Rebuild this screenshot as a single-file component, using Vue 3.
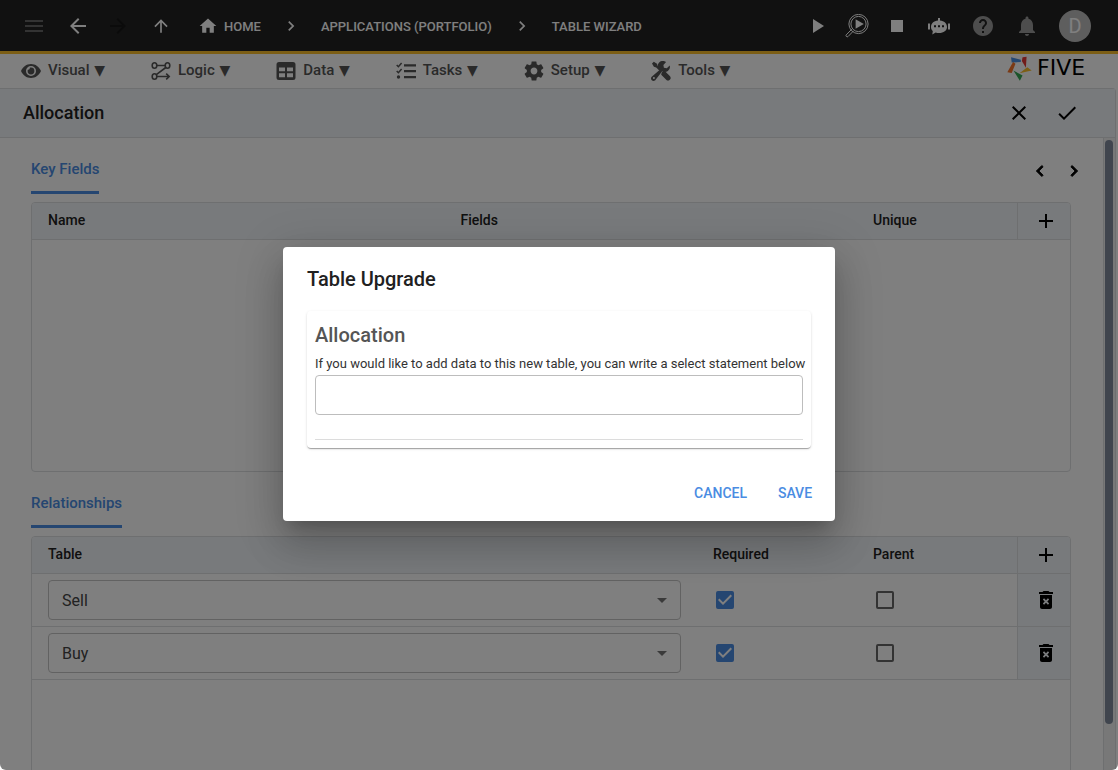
<script setup>
import { ref } from 'vue'

const query = ref('')
const rows = ref([
  { table: 'Sell', required: true, parent: false },
  { table: 'Buy', required: true, parent: false }
])
const menus = ['Visual', 'Logic', 'Data', 'Tasks', 'Setup', 'Tools']
</script>

<template>
  <div class="app">
    <header class="topbar">
      <button class="slot menu" aria-label="Menu">
        <svg width="24" height="24" viewBox="0 0 24 24"><path d="M3 18h18v-2H3v2zm0-5h18v-2H3v2zm0-7v2h18V6H3z" /></svg>
      </button>
      <button class="slot" aria-label="Back">
        <svg width="24" height="24" viewBox="0 0 24 24"><path d="M20 11H7.83l5.59-5.59L12 4l-8 8 8 8 1.41-1.41L7.83 13H20v-2z" /></svg>
      </button>
      <button class="slot forward" aria-label="Forward" disabled>
        <svg width="24" height="24" viewBox="0 0 24 24"><path d="M12 4l-1.41 1.41L16.17 11H4v2h12.17l-5.58 5.59L12 20l8-8z" /></svg>
      </button>
      <button class="slot up" aria-label="Up">
        <svg width="20" height="20" viewBox="0 0 24 24"><path d="M4 12l1.41 1.41L11 7.83V20h2V7.83l5.58 5.59L20 12l-8-8-8 8z" /></svg>
      </button>
      <nav class="crumbs" aria-label="Breadcrumb">
        <a href="#" class="home">
          <svg width="20" height="20" viewBox="0 0 24 24"><path d="M10 20v-6h4v6h5v-8h3L12 3 2 12h3v8z" /></svg>
          HOME
        </a>
        <svg width="20" height="20" viewBox="0 0 24 24"><path d="M10 6L8.59 7.41 13.17 12l-4.58 4.59L10 18l6-6z" /></svg>
        <a href="#">APPLICATIONS (PORTFOLIO)</a>
        <svg width="20" height="20" viewBox="0 0 24 24"><path d="M10 6L8.59 7.41 13.17 12l-4.58 4.59L10 18l6-6z" /></svg>
        <a href="#">TABLE WIZARD</a>
      </nav>
      <div class="tools">
        <button class="tool" aria-label="Run">
          <svg width="24" height="24" viewBox="0 0 24 24"><path d="M8 5v14l11-7z" /></svg>
        </button>
        <button class="tool" aria-label="Inspect">
          <svg width="24" height="24" viewBox="0 0 24 24">
            <g fill="none" stroke="currentColor" stroke-width="1">
              <circle cx="13.5" cy="10" r="9.6" /><circle cx="13.5" cy="10" r="7.6" />
              <path d="M6.8 15.2l-5.6 5.7c-.9 1 .8 2.6 1.8 1.7l5.5-5.7" />
            </g>
            <path d="M10.6 5.2v9.6l8.2-4.8z" />
          </svg>
        </button>
        <button class="tool" aria-label="Stop">
          <svg width="24" height="24" viewBox="0 0 24 24"><path d="M6 6h12v12H6z" /></svg>
        </button>
        <button class="tool wide" aria-label="Assistant">
          <svg width="24" height="24" viewBox="0 0 24 24">
            <path fill-rule="evenodd" d="M11 4h2v2.6c4.2.3 7 3 7 6.4 0 3.6-3.300 6-8 6-1.200 0-2.300-.1-3.300-.5L5.300 20.600l.5-3.600C4.600 15.900 4 14.600 4 13c0-3.400 2.800-6.100 7-6.400zM7 11.200v2h2v-2zm4 0v2h2v-2zm4 0v2h2v-2z" />
            <path d="M1 9.500h2v6H1zM21 9.500h2v6h-2z" />
          </svg>
        </button>
        <button class="tool wide soft" aria-label="Help">
          <svg width="24" height="24" viewBox="0 0 24 24"><path d="M12 2C6.480 2 2 6.480 2 12s4.480 10 10 10 10-4.480 10-10S17.520 2 12 2zm1 17h-2v-2h2v2zm2.070-7.750l-.9.920C13.450 12.900 13 13.500 13 15h-2v-.5c0-1.100.45-2.100 1.170-2.830l1.240-1.260c.37-.36.59-.86.59-1.410 0-1.100-.9-2-2-2s-2 .9-2 2H8c0-2.210 1.790-4 4-4s4 1.790 4 4c0 .88-.36 1.680-.93 2.250z" /></svg>
        </button>
        <button class="tool wide soft" aria-label="Notifications">
          <svg width="24" height="24" viewBox="0 0 24 24"><path d="M12 22c1.100 0 2-.9 2-2h-4c0 1.100.89 2 2 2zm6-6v-5c0-3.070-1.640-5.640-4.500-6.320V4c0-.83-.67-1.500-1.500-1.500s-1.500.67-1.500 1.500v.68C7.630 5.360 6 7.920 6 11v5l-2 2v1h16v-1l-2-2z" /></svg>
        </button>
        <button class="avatar" aria-label="Account">D</button>
      </div>
    </header>

    <nav class="menubar" aria-label="Main">
      <button v-for="m in menus" :key="m" class="menu-item">
        <svg v-if="m === 'Visual'" width="20" height="20" viewBox="0 0 20 20">
          <path fill-rule="evenodd" d="M10 3C5.500 3 1.800 5.800 0 10c1.800 4.200 5.500 7 10 7s8.200-2.800 10-7c-1.800-4.200-5.500-7-10-7zm0 2a5 5 0 110 10 5 5 0 010-10z" />
          <path d="M10 6.600a3.400 3.400 0 11-3.400 3.400c0-.5.100-.9.300-1.300a1.600 1.600 0 001.900-1.900c.4-.1.800-.2 1.200-.2z" />
        </svg>
        <svg v-else-if="m === 'Logic'" width="20" height="20" viewBox="0 0 20 20" fill="none" stroke="currentColor" stroke-width="1.600">
          <ellipse cx="3.500" cy="4.500" rx="2.300" ry="2.700" /><ellipse cx="16.500" cy="4.500" rx="2.300" ry="2.700" /><ellipse cx="3.500" cy="15.500" rx="2.300" ry="2.700" />
          <path d="M6 4.500h8M14.800 6.500L5.300 13.700M6 15.500h12M15.200 12.600l3 2.900-3 2.900" />
        </svg>
        <svg v-else-if="m === 'Data'" width="20" height="20" viewBox="0 0 20 20">
          <path fill-rule="evenodd" d="M3 1h14a2.500 2.500 0 012.500 2.500v13A2.500 2.500 0 0117 19H3a2.500 2.500 0 01-2.500-2.500v-13A2.500 2.500 0 013 1zm0 5.500v3.800h6V6.500zm8 0v3.800h6V6.500zm-8 5.800v4h6v-4zm8 0v4h6v-4z" />
        </svg>
        <svg v-else-if="m === 'Tasks'" width="20" height="20" viewBox="0 0 20 20">
          <path d="M8 3.200h12v2.200H8zM8 9h12v2.200H8zM8 15h12v2.200H8z" /><circle cx="2.500" cy="16" r="1.700" />
          <path d="M.7 4l1.700 1.700L5.600 2M.7 10l1.700 1.700L5.600 8" fill="none" stroke="currentColor" stroke-width="1.500" />
        </svg>
        <svg v-else-if="m === 'Setup'" width="20" height="20" viewBox="2 2 20 20"><path d="M19.140 12.940c.04-.3.060-.61.060-.94 0-.32-.02-.64-.07-.94l2.030-1.580c.18-.14.23-.41.12-.61l-1.920-3.320c-.12-.22-.37-.29-.59-.22l-2.390.96c-.5-.38-1.030-.7-1.620-.94l-.36-2.540c-.04-.24-.24-.41-.48-.41h-3.840c-.24 0-.43.17-.47.41l-.36 2.540c-.59.24-1.130.57-1.620.94l-2.390-.96c-.22-.08-.47 0-.59.22L2.740 8.870c-.12.21-.08.47.12.61l2.030 1.580c-.05.3-.09.63-.09.94s.02.64.07.94l-2.030 1.580c-.18.14-.23.41-.12.61l1.920 3.320c.12.22.37.29.59.22l2.390-.96c.5.38 1.030.7 1.620.94l.36 2.540c.05.24.24.41.48.41h3.840c.24 0 .44-.17.47-.41l.36-2.540c.59-.24 1.130-.56 1.620-.94l2.390.96c.22.08.47 0 .59-.22l1.920-3.320c.12-.22.07-.47-.12-.61l-2.010-1.580zM12 15.400c-1.880 0-3.400-1.520-3.400-3.400s1.520-3.400 3.400-3.400 3.400 1.520 3.400 3.400-1.520 3.400-3.400 3.400z" /></svg>
        <svg v-else width="20" height="20" viewBox="0 0 20 20">
          <path d="M2.800.8L1 2.600l1.900 3.200 2.300.7 3.300 3.300 1.500-1.500L6.700 5 6 2.700z" />
          <path d="M11.800 10.300l1.700-.5 5.300 5.300a2.500 2.500 0 01-3.600 3.600l-5-5 .4-1.900z" />
          <path fill-rule="evenodd" d="M1.300 15.200l7.200-6.300a5 5 0 016.600-7.800L12.400 3.900l.5 2.900 2.900.4 2.900-2.600a5 5 0 01-7.500 5.600l-6.400 8.200a2.500 2.500 0 11-3.500-3.200zm1.600.9a1 1 0 100 2 1 1 0 000-2z" />
        </svg>
        <span class="menu-label">{{ m }} <span class="caret">▼</span></span>
      </button>
      <div class="logo">
        <svg width="25" height="25" viewBox="0 0 74 74" aria-hidden="true">
          <path fill="#4a90e2" d="M12 4l29 7v7l-27 1z" />
          <path fill="#e53935" d="M46 4l12-2-2 33-12-20z" />
          <path fill="#f4742b" d="M18 18l7 5-11 27-13-2z" />
          <path fill="#f8bd2a" d="M37 51l23-18 13 10z" />
          <path fill="#34a853" d="M19 43l27 15-8 15z" />
        </svg>
        <span>FIVE</span>
      </div>
    </nav>

    <main class="panel">
      <div class="panel-head">
        <h1>Allocation</h1>
        <button class="tool wide-2" aria-label="Discard">
          <svg width="24" height="24" viewBox="0 0 24 24"><path d="M19 6.410L17.590 5 12 10.590 6.410 5 5 6.410 10.590 12 5 17.590 6.410 19 12 13.410 17.590 19 19 17.590 13.410 12z" /></svg>
        </button>
        <button class="tool wide-2" aria-label="Accept">
          <svg width="24" height="24" viewBox="0 0 24 24"><path d="M9 16.170L4.830 12l-1.420 1.410L9 19 21 7l-1.410-1.410z" /></svg>
        </button>
      </div>

      <div class="panel-body">
        <div class="content">
          <div class="tabline">
            <button class="tab">Key Fields</button>
            <div class="pager">
              <button aria-label="Previous"><svg width="22" height="22" viewBox="0 0 24 24"><path d="M15.410 7.410L14 6l-6 6 6 6 1.410-1.410L10.830 12z" stroke="currentColor" /></svg></button>
              <button aria-label="Next"><svg width="22" height="22" viewBox="0 0 24 24"><path d="M10 6L8.590 7.410 13.170 12l-4.580 4.590L10 18l6-6z" stroke="currentColor" /></svg></button>
            </div>
          </div>
          <div class="grid">
            <table>
              <colgroup><col /><col /><col class="c-flag" /><col class="c-act" /></colgroup>
              <thead>
                <tr>
                  <th>Name</th><th>Fields</th><th>Unique</th>
                  <th class="act"><button aria-label="Add field"><svg width="24" height="24" viewBox="0 0 24 24"><path d="M19 13h-6v6h-2v-6H5v-2h6V5h2v6h6v2z" /></svg></button></th>
                </tr>
              </thead>
            </table>
          </div>

          <div class="tabline">
            <button class="tab">Relationships</button>
          </div>
          <div class="grid">
            <table>
              <colgroup><col /><col class="c-flag" /><col class="c-flag" /><col class="c-act" /></colgroup>
              <thead>
                <tr>
                  <th>Table</th><th>Required</th><th>Parent</th>
                  <th class="act"><button aria-label="Add relationship"><svg width="24" height="24" viewBox="0 0 24 24"><path d="M19 13h-6v6h-2v-6H5v-2h6V5h2v6h6v2z" /></svg></button></th>
                </tr>
              </thead>
              <tbody>
                <tr v-for="(row, i) in rows" :key="i">
                  <td>
                    <div class="select">
                      <select v-model="row.table" :aria-label="'Table ' + (i + 1)">
                        <option>Sell</option>
                        <option>Buy</option>
                      </select>
                      <svg width="24" height="24" viewBox="0 0 24 24"><path d="M7 10l5 5 5-5z" /></svg>
                    </div>
                  </td>
                  <td v-for="k in ['required', 'parent']" :key="k">
                    <span class="check">
                      <input v-model="row[k]" type="checkbox" :aria-label="row.table + ' ' + k" />
                      <svg v-if="row[k]" width="18" height="18" viewBox="3 3 18 18"><path d="M10 17l-5-5 1.410-1.410L10 14.170l7.590-7.590L19 8l-9 9z" /></svg>
                    </span>
                  </td>
                  <td class="act">
                    <button :aria-label="'Delete ' + row.table">
                      <svg width="24" height="24" viewBox="0 0 24 24"><path fill-rule="evenodd" d="M9.500 3h5l1 1H19v2H5V4h3.500zM6 7h12v12c0 1.100-.9 2-2 2H8c-1.100 0-2-.9-2-2zm2.800 4.600l1.900 1.900-1.900 1.900 1.300 1.300 1.900-1.900 1.900 1.900 1.300-1.300-1.900-1.900 1.900-1.900-1.300-1.300-1.900 1.900-1.900-1.900z" /></svg>
                    </button>
                  </td>
                </tr>
              </tbody>
            </table>
          </div>
        </div>
        <div class="track"><div class="thumb"></div></div>
      </div>
    </main>

    <div class="overlay">
      <section class="dialog" role="dialog" aria-modal="true" aria-labelledby="dlg-title">
        <h2 id="dlg-title">Table Upgrade</h2>
        <div class="card">
          <h3>Allocation</h3>
          <label for="query">If you would like to add data to this new table, you can write a select statement below</label>
          <input id="query" v-model="query" type="text" />
          <hr />
        </div>
        <div class="actions">
          <button>CANCEL</button>
          <button>SAVE</button>
        </div>
      </section>
    </div>
  </div>
</template>

<style>
body { background: #fff; }
</style>

<style scoped>
* { box-sizing: border-box; }
.app {
  position: relative;
  display: flex;
  flex-direction: column;
  height: 100vh;
  overflow: hidden;
  background: #fff;
  color: #212121;
  font-family: Roboto, "Liberation Sans", sans-serif;
  font-size: 14px;
  border-radius: 0 0 6px 6px;
}
svg { display: block; flex: none; fill: currentColor; }
svg[fill="none"], svg g[fill="none"] { fill: none; }
button {
  display: flex;
  align-items: center;
  justify-content: center;
  padding: 0;
  border: 0;
  background: none;
  color: inherit;
  font: inherit;
  cursor: pointer;
}
a { color: inherit; text-decoration: none; }
h1, h2, h3 { margin: 0; font-weight: 500; }

.topbar {
  display: flex;
  flex: none;
  align-items: center;
  height: 54px;
  padding: 0 27px 0 12px;
  border-bottom: 3px solid #f8bd2a;
  background: #222;
  color: #fff;
}
.slot { width: 44px; height: 44px; }
.menu { color: #666; }
.forward { width: 36px; color: #161616; }
.up { width: 50px; }
.crumbs {
  display: flex;
  align-items: center;
  gap: 20px;
  margin-left: 12px;
  font-size: 13px;
  font-weight: 500;
  white-space: nowrap;
}
.crumbs a { padding-top: 2px; }
.home { display: flex; align-items: center; gap: 6px; }
.home svg { margin-bottom: 2px; }
.tools { display: flex; align-items: center; margin-left: auto; }
.tool { width: 40px; height: 40px; }
.wide { width: 44px; }
.wide-2 { width: 48px; }
.soft { color: #9a9a9a; }
.avatar {
  width: 32px;
  height: 32px;
  margin-left: 10px;
  border-radius: 50%;
  background: #bdbdbd;
  font-size: 20px;
}

.menubar {
  display: flex;
  flex: none;
  align-items: center;
  gap: 46px;
  height: 34px;
  padding: 0 23px 0 21px;
  color: #555;
  font-weight: 500;
  font-size: 15px;
}
.menu-item { gap: 7px; white-space: nowrap; }
.menu-label { padding-bottom: 2px; line-height: 20px; }
.caret { margin-left: 1px; font-family: "DejaVu Sans", sans-serif; font-size: 14px; line-height: 14px; }
.logo {
  display: flex;
  align-items: center;
  align-self: flex-start;
  gap: 5px;
  width: 88px;
  height: 28px;
  margin-left: auto;
  color: #000;
  font: 22px/24px "DejaVu Sans", sans-serif;
}

.panel {
  display: flex;
  flex: 1;
  flex-direction: column;
  min-height: 0;
  margin-right: 2px;
  border: 1px solid #dcdee1;
  border-width: 1px 1px 0 0;
  border-radius: 0 4px 0 0;
}
.panel-head {
  display: flex;
  flex: none;
  align-items: center;
  height: 49px;
  padding: 0 24px 0 23px;
  border-bottom: 1px solid #dcdee1;
  background: #f1f4f8;
}
.panel-head h1 { flex: 1; font-size: 18px; line-height: 24px; }
.panel-head .tool { color: #000; }
.panel-body { display: flex; flex: 1; min-height: 0; }
.content { flex: 1; min-width: 0; padding: 0 32px 0 31px; overflow: hidden; }
.track { flex: none; width: 12px; padding: 2px 1px 0; border-left: 1px solid #dcdee1; background: #f0f0f0; }
.thumb { width: 8px; height: 92.7%; border-radius: 4px; background: #808a9c; }

.tabline { display: flex; align-items: flex-start; justify-content: space-between; height: 64px; }
.tab {
  height: 56px;
  padding-top: 9px;
  border-bottom: 3px solid #4a8ce2;
  color: #4a8ce2;
  font-size: 15px;
  font-weight: 500;
}
.pager { display: flex; padding-top: 16px; margin-right: -20px; color: #000; }
.pager button { width: 34px; height: 34px; }

.grid {
  height: 270px;
  overflow: hidden;
  border: 1px solid #dcdee1;
  border-radius: 4px;
}
table { width: 100%; table-layout: fixed; border-collapse: separate; border-spacing: 0; }
.c-flag { width: 160px; }
.c-act { width: 53px; }
th, td { border-bottom: 1px solid #dcdee1; text-align: left; }
th { height: 37px; padding: 0 16px 2px; background: #f1f4f8; font-weight: 500; }
td { height: 53px; padding: 0 16px; }
.act { padding: 0 0 0 4px; border-left: 1px solid #dcdee1; background: #f1f4f8; color: #000; }
.act button { width: 100%; }

.select { position: relative; }
.select select {
  display: block;
  width: 100%;
  height: 40px;
  padding: 2px 32px 0 13px;
  border: 1px solid #c4c4c4;
  border-radius: 4px;
  appearance: none;
  background: #fff;
  color: #444;
  font: 16px/24px Roboto, "Liberation Sans", sans-serif;
}
.select svg { position: absolute; top: 8px; right: 7px; color: #757575; pointer-events: none; }
.check { position: relative; display: block; width: 18px; height: 18px; margin-left: 3px; }
.check input {
  display: block;
  width: 18px;
  height: 18px;
  margin: 0;
  border: 2px solid #666;
  border-radius: 2px;
  appearance: none;
}
.check input:checked { border-color: #4a8ce2; background: #4a8ce2; }
.check svg { position: absolute; inset: 0; color: #fff; pointer-events: none; }

.overlay {
  position: absolute;
  inset: 0;
  display: flex;
  align-items: center;
  justify-content: center;
  padding-bottom: 2px;
  background: rgba(0, 0, 0, 0.5);
}
.dialog {
  width: 552px;
  max-width: 90%;
  padding: 16px 24px 10px;
  border-radius: 4px;
  background: #fff;
  box-shadow: 0 11px 15px -7px rgba(0, 0, 0, 0.2), 0 24px 38px 3px rgba(0, 0, 0, 0.14), 0 9px 46px 8px rgba(0, 0, 0, 0.12);
}
.dialog h2 { font-size: 20px; line-height: 32px; }
.card {
  margin-top: 16px;
  padding: 8px;
  border-radius: 4px;
  box-shadow: 0 2px 1px -1px rgba(0, 0, 0, 0.2), 0 1px 1px rgba(0, 0, 0, 0.14), 0 1px 3px rgba(0, 0, 0, 0.12);
}
.card h3 { color: #555; font-size: 20px; line-height: 32px; }
.card label { display: block; margin-top: 2px; color: #333; font-size: 13px; line-height: 22px; white-space: nowrap; }
.card input {
  display: block;
  width: 100%;
  height: 40px;
  padding: 0 12px;
  border: 1px solid #bdbdbd;
  border-radius: 4px;
  font: 16px/24px Roboto, "Liberation Sans", sans-serif;
}
.card hr { height: 1px; margin: 24px 0 0; border: 0; background: #dcdcdc; }
.actions { display: flex; justify-content: flex-end; gap: 8px; margin: 27px -16px 0 0; }
.actions button { min-width: 64px; height: 36px; padding: 0 8px; color: #4a8ce2; font-weight: 500; }
</style>
